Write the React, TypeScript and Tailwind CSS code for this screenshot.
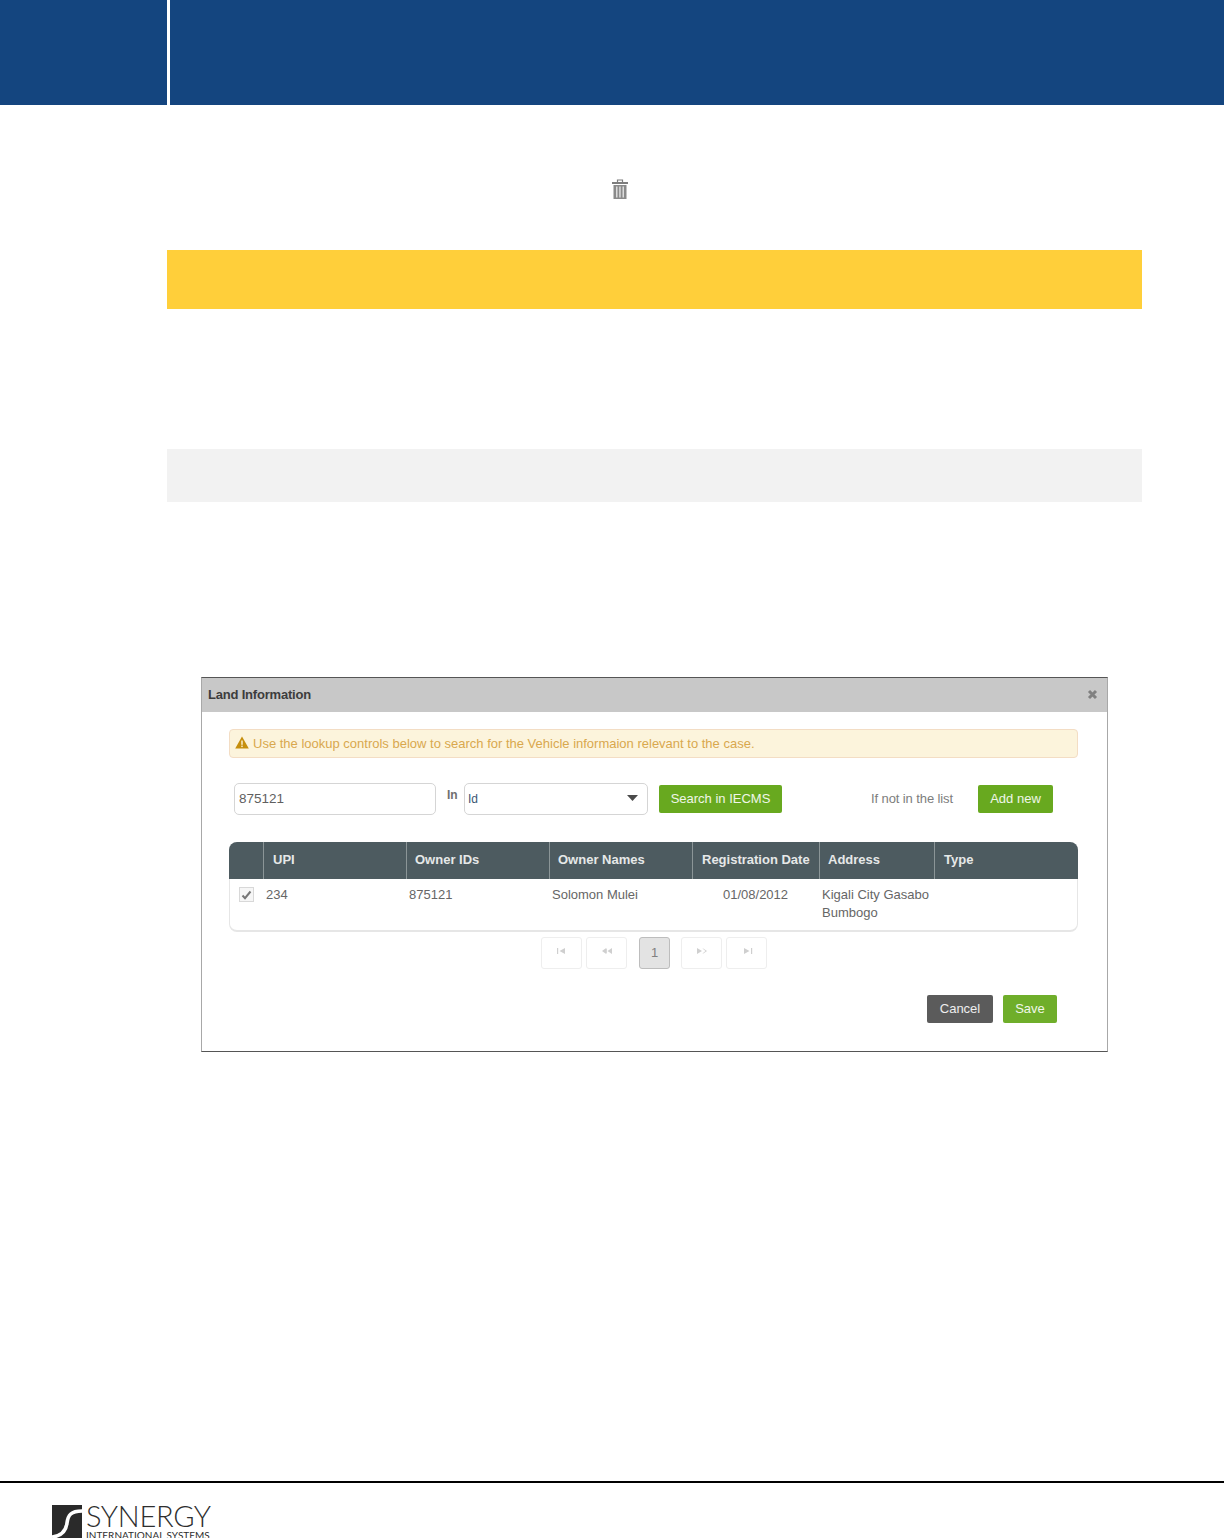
import React from "react";

const cols = [
  { w: "w-[35px]", pl: "pl-[9px]", label: "" },
  { w: "w-[143px]", pl: "pl-[9px]", label: "UPI" },
  { w: "w-[143px]", pl: "pl-[8px]", label: "Owner IDs" },
  { w: "w-[143px]", pl: "pl-[8px]", label: "Owner Names" },
  { w: "w-[127px]", pl: "pl-[9px]", label: "Registration Date" },
  { w: "w-[115px]", pl: "pl-[8px]", label: "Address" },
  { w: "flex-1", pl: "pl-[9px]", label: "Type" },
];

function Pager({ children, active }: { children: React.ReactNode; active?: boolean }) {
  return (
    <div
      className={
        active
          ? "w-[31px] h-[32px] rounded-[3px] border border-[#bdbdbd] bg-[#e3e3e3] text-[#808080] text-[13px] flex items-center justify-center"
          : "w-[41px] h-[32px] rounded-[3px] border border-[#eeeeee] bg-white flex items-center justify-center"
      }
    >
      {children}
    </div>
  );
}

function Glyph({ d }: { d: string }) {
  return (
    <svg width="12" height="8" viewBox="0 0 12 8" className="-mt-1">
      <path d={d} fill="#cfcfcf" />
    </svg>
  );
}

export default function App() {
  return (
    <div className="w-[1224px] h-[1538px] overflow-hidden bg-white flex flex-col font-['Liberation_Sans',Arial,sans-serif]">
      <header className="h-[105px] flex shrink-0">
        <div className="w-[167px] bg-[#14457f]" />
        <div className="flex-1 ml-[3px] bg-[#14457f]" />
      </header>

      <div className="h-[145px] shrink-0 flex items-start pt-[74px] pl-[611px]">
        <svg width="18" height="21" viewBox="0 0 18 21">
          <path d="M6.5 3V1h5v2" fill="none" stroke="#7d7d7d" strokeWidth="1.2" />
          <rect x="1" y="3" width="16" height="2" fill="#7d7d7d" />
          <rect x="2.5" y="6" width="13" height="14" fill="#8a8a8a" />
          <rect x="5" y="7.5" width="1.5" height="11" fill="#dcdcdc" />
          <rect x="8.2" y="7.5" width="1.5" height="11" fill="#dcdcdc" />
          <rect x="11.5" y="7.5" width="1.5" height="11" fill="#dcdcdc" />
        </svg>
      </div>

      <div className="ml-[167px] w-[975px] h-[59px] bg-[#ffcf3a] shrink-0" />
      <div className="ml-[167px] w-[975px] h-[53px] mt-[140px] bg-[#f2f2f2] shrink-0" />

      <section className="ml-[201px] mt-[175px] w-[907px] h-[375px] shrink-0 border border-[#a8a8a8] border-t-[#555555] border-b-[#555555] bg-white flex flex-col text-[13px] text-[#6b6b6b]">
        <div className="h-[34px] bg-[#c8c8c8] flex items-center justify-between pl-[6px] pr-[9px] shrink-0">
          <span className="font-bold text-[#3d3d3d] tracking-[-0.2px]">Land Information</span>
          <svg width="11" height="11" viewBox="0 0 11 11" className="-mt-px">
            <path d="M2 2l7 7M9 2l-7 7" stroke="#808080" strokeWidth="3" />
          </svg>
        </div>

        <div className="ml-[27px] mr-[29px] mt-[17px] h-[29px] rounded-[4px] border border-[#f3ddc4] bg-[#fcf4dc] flex items-center pl-[5px] text-[#d9a84e] shrink-0">
          <svg width="14" height="13" viewBox="0 0 14 13" className="mr-[4px] -mt-[2px]">
            <path d="M7 0.5L13.8 12.5H0.2Z" fill="#c68f0d" />
            <rect x="6.3" y="4.5" width="1.4" height="4.3" fill="#fcf4dc" />
            <rect x="6.3" y="9.6" width="1.4" height="1.5" fill="#fcf4dc" />
          </svg>
          Use the lookup controls below to search for the Vehicle informaion relevant to the case.
        </div>

        <div className="flex items-center mt-[24px] ml-[32px] h-[33px] shrink-0">
          <div className="w-[202px] h-[32px] rounded-[5px] border border-[#d5d5d5] flex items-center pl-[4px] pt-[2px] text-[#5f5f5f] text-[13.5px]">875121</div>
          <span className="ml-[11px] w-[17px] -mt-[7px] font-bold text-[#6f6f6f] text-[12px]">In</span>
          <div className="w-[184px] h-[32px] rounded-[5px] border border-[#d5d5d5] flex items-center justify-between pl-[3px] pr-[9px] text-[#3b5674] text-[12px]">
            <span>Id</span>
            <svg width="11" height="6" viewBox="0 0 11 6" className="-mt-[2px]"><path d="M0 0h11L5.5 6z" fill="#4a4a4a" /></svg>
          </div>
          <button className="ml-[11px] w-[123px] h-[28px] rounded-[2px] bg-[#68a91f] text-white/90 text-[13px]">Search in IECMS</button>
          <span className="ml-[89px] w-[107px] text-[#7d7d7d] tracking-[-0.1px]">If not in the list</span>
          <button className="w-[75px] h-[28px] rounded-[2px] bg-[#68a91f] text-white/90 text-[13px]">Add new</button>
        </div>

        <div className="ml-[27px] mr-[29px] mt-[27px] h-[90px] rounded-[8px] border-b-2 border-x border-[#e6e6e6] shrink-0">
          <div className="h-[37px] -mx-px bg-[#4d5b60] rounded-t-[8px] flex text-[#e6e8e8] font-bold">
            {cols.map((c, i) => (
              <div key={i} className={`${c.w} ${c.pl} flex items-center pb-[2px] ${i < 6 ? "border-r border-[#8b9597]" : ""}`}>{c.label}</div>
            ))}
          </div>
          <div className="flex -mx-px pt-[7px] text-[#666666] leading-[18px]">
            <div className="w-[34px] pl-[10px] pt-px">
              <div className="w-[15px] h-[15px] border border-[#d8d8d8] bg-[#f6f6f6] flex items-center justify-center">
                <svg width="11" height="10" viewBox="0 0 11 10"><path d="M1.5 5.5L4 8.2 9.5 1.5" fill="none" stroke="#777777" strokeWidth="2" /></svg>
              </div>
            </div>
            <div className="w-[143px] pl-[3px]">234</div>
            <div className="w-[143px] pl-[3px]">875121</div>
            <div className="w-[143px] pl-[3px]">Solomon Mulei</div>
            <div className="w-[127px] pl-[31px]">01/08/2012</div>
            <div className="w-[115px] pl-[3px] whitespace-nowrap">Kigali City Gasabo<br />Bumbogo</div>
          </div>
        </div>

        <div className="flex items-start ml-[339px] mt-[5px] shrink-0">
          <Pager><Glyph d="M1 1h1.2v6H1zM9 1v6L3.5 4z" /></Pager>
          <div className="w-[4px]" />
          <Pager><Glyph d="M5.8 1.6v4.8L2 4zM5.2 1L5.2 7 1 4zM11 1v6L6.5 4z" /></Pager>
          <div className="w-[12px]" />
          <Pager active>1</Pager>
          <div className="w-[11px]" />
          <Pager><Glyph d="M1 1v6L6 4zM6.5 1L11 4 6.5 7l.6-1L9.5 4 7.1 2z" /></Pager>
          <div className="w-[4px]" />
          <Pager><Glyph d="M3 1v6L8.5 4zM10 1h1.2v6H10z" /></Pager>
        </div>

        <div className="flex justify-end gap-[10px] mr-[50px] mt-[26px] shrink-0">
          <button className="w-[66px] h-[28px] rounded-[2px] bg-[#5b5b5b] text-white/90 text-[13px]">Cancel</button>
          <button className="w-[54px] h-[28px] rounded-[2px] bg-[#6fae2a] text-white/90 text-[13px]">Save</button>
        </div>
      </section>

      <footer className="mt-[429px] shrink-0">
        <div className="h-[2px] bg-black" />
        <div className="flex ml-[52px] mt-[22px] h-[33px]">
          <svg width="30" height="33" viewBox="0 0 30 33" className="shrink-0">
            <rect width="30" height="33" fill="#2a2a2a" />
            <path d="M30 6C19 6 16 10 15 18C14 26 10 31 0 32" fill="none" stroke="#ffffff" strokeWidth="3.6" />
          </svg>
          <div className="ml-[4px] text-[#2e2e2e] font-['Lato',sans-serif]">
            <div className="text-[29px] leading-[22px] font-light tracking-[-0.3px]">SYNERGY</div>
            <div className="text-[10px] leading-[10px] mt-[3px] whitespace-nowrap">INTERNATIONAL SYSTEMS</div>
          </div>
        </div>
      </footer>
    </div>
  );
}
